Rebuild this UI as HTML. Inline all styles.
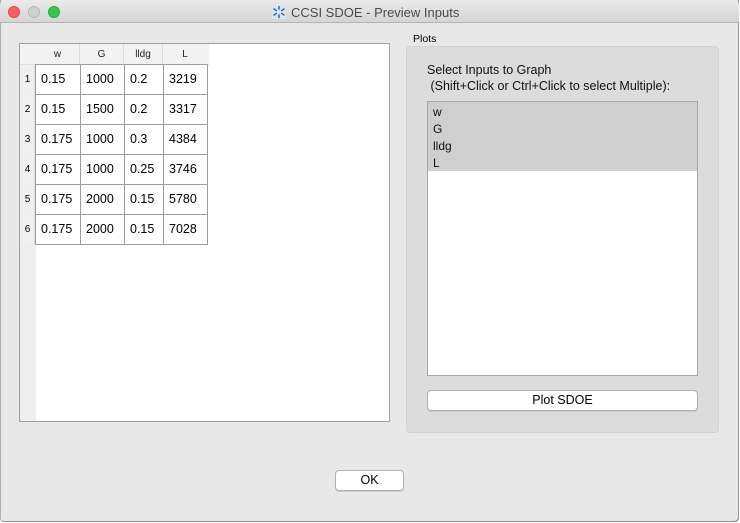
<!DOCTYPE html>
<html><head><style>
*{margin:0;padding:0;box-sizing:border-box}
body{width:740px;height:523px;background:#fff;font-family:"Liberation Sans",sans-serif;position:relative;overflow:hidden}
.win{position:absolute;left:0;top:0;width:739px;height:522px;background:#e8e8e8;box-shadow:inset -1px -1px 0 #909090, inset 1px 0 0 #b0b0b0;border-radius:0 0 4px 4px}
.title{position:absolute;left:0;top:0;width:739px;height:23px;background:linear-gradient(#ebebeb,#d5d5d5);border-bottom:1px solid #b4b4b4;border-radius:5px 5px 0 0}
.dot{position:absolute;top:6px;width:12px;height:12px;border-radius:50%}
.ttl{position:absolute;left:291px;top:5px;font-size:13px;color:#4a4a4a}
.abs{position:absolute}
.tbl{position:absolute;left:19px;top:43px;width:371px;height:379px;background:#fff;border:1px solid #a0a0a0}
.hdr{position:absolute;left:0;top:0;height:21px;font-size:10px;color:#222;text-align:center;line-height:21px;background:#f2f2f2}
.rn{position:absolute;left:0;width:16px;background:#eeeeee;font-size:10px;text-align:center}
.cell{position:absolute;height:31px;border:1px solid #9c9c9c;font-size:12.5px;line-height:29px;padding-left:5px;color:#000;background:#fff}
.btn{position:absolute;background:#fff;border:1px solid #b0b0b0;border-radius:4px;font-size:12.5px;text-align:center;line-height:18px;box-shadow:0 1px 0 #c8c8c8}
</style></head><body>
<div class="win">
<div class="title">
<div class="dot" style="left:8px;background:#fc605c;border:1px solid #de4a45"></div>
<div class="dot" style="left:28px;background:#cfcfcf;border:1px solid #b8b8b8"></div>
<div class="dot" style="left:48px;background:#34c84a;border:1px solid #2aa83c"></div>
<svg class="abs" style="left:272px;top:5px" width="14" height="14" viewBox="0 0 14 14"><rect width="14" height="14" fill="#dde6f0"/><g stroke="#2a6fb5" stroke-width="1.6" stroke-linecap="round"><line x1="7" y1="1.5" x2="7" y2="4"/><line x1="7" y1="10" x2="7" y2="12.5"/><line x1="2" y1="4" x2="4.3" y2="5.5"/><line x1="12" y1="10" x2="9.7" y2="8.5"/><line x1="2" y1="10" x2="4.3" y2="8.5"/><line x1="12" y1="4" x2="9.7" y2="5.5"/></g></svg>
<div class="ttl">CCSI SDOE - Preview Inputs</div>
</div>

<div class="tbl">
<div class="hdr" style="width:189px;border-bottom:1px solid #e0e0e0"></div>
<div class="hdr" style="left:16px;width:44px;border-right:1px solid #ddd">w</div>
<div class="hdr" style="left:60px;width:44px;border-right:1px solid #ddd">G</div>
<div class="hdr" style="left:104px;width:39px;border-right:1px solid #ddd">lldg</div>
<div class="hdr" style="left:143px;width:44px">L</div>
<div class="rn" style="top:21px;height:356px"></div>
</div>
<div id="rows"></div>

<div class="abs" style="left:413px;top:33px;font-size:10.5px">Plots</div>
<div class="abs" style="left:406px;top:46px;width:313px;height:387px;background:#dcdcdc;border:1px solid #d2d2d2;border-radius:4px"></div>
<div class="abs" style="left:427px;top:62px;font-size:12.5px;line-height:16px;color:#111">Select Inputs to Graph<br>&nbsp;(Shift+Click or Ctrl+Click to select Multiple):</div>
<div class="abs" style="left:427px;top:101px;width:271px;height:275px;background:#fff;border:1px solid #a8a8a8">
<div style="background:#cfcfcf;height:69px;font-size:12px;line-height:17px;padding:2px 0 0 5px;color:#111">w<br>G<br>lldg<br>L</div>
</div>
<div class="btn" style="left:427px;top:390px;width:271px;height:21px">Plot SDOE</div>
<div class="btn" style="left:335px;top:470px;width:69px;height:21px">OK</div>
</div>
<script>
var d=[["0.15","1000","0.2","3219"],["0.15","1500","0.2","3317"],["0.175","1000","0.3","4384"],["0.175","1000","0.25","3746"],["0.175","2000","0.15","5780"],["0.175","2000","0.15","7028"]];
var xs=[35,80,124,163],ws=[46,45,40,45],h="";
d.forEach(function(r,i){var y=64+i*30;
h+='<div class="abs" style="left:21px;top:'+(y+1)+'px;width:14px;height:29px;font-size:10px;line-height:29px;text-align:center;background:#f0f0f0;border-right:1px solid #ddd">'+(i+1)+'</div>';
r.forEach(function(v,j){h+='<div class="cell" style="left:'+xs[j]+'px;top:'+y+'px;width:'+ws[j]+'px">'+v+'</div>';});});
document.getElementById('rows').outerHTML=h;
</script>
</body></html>
